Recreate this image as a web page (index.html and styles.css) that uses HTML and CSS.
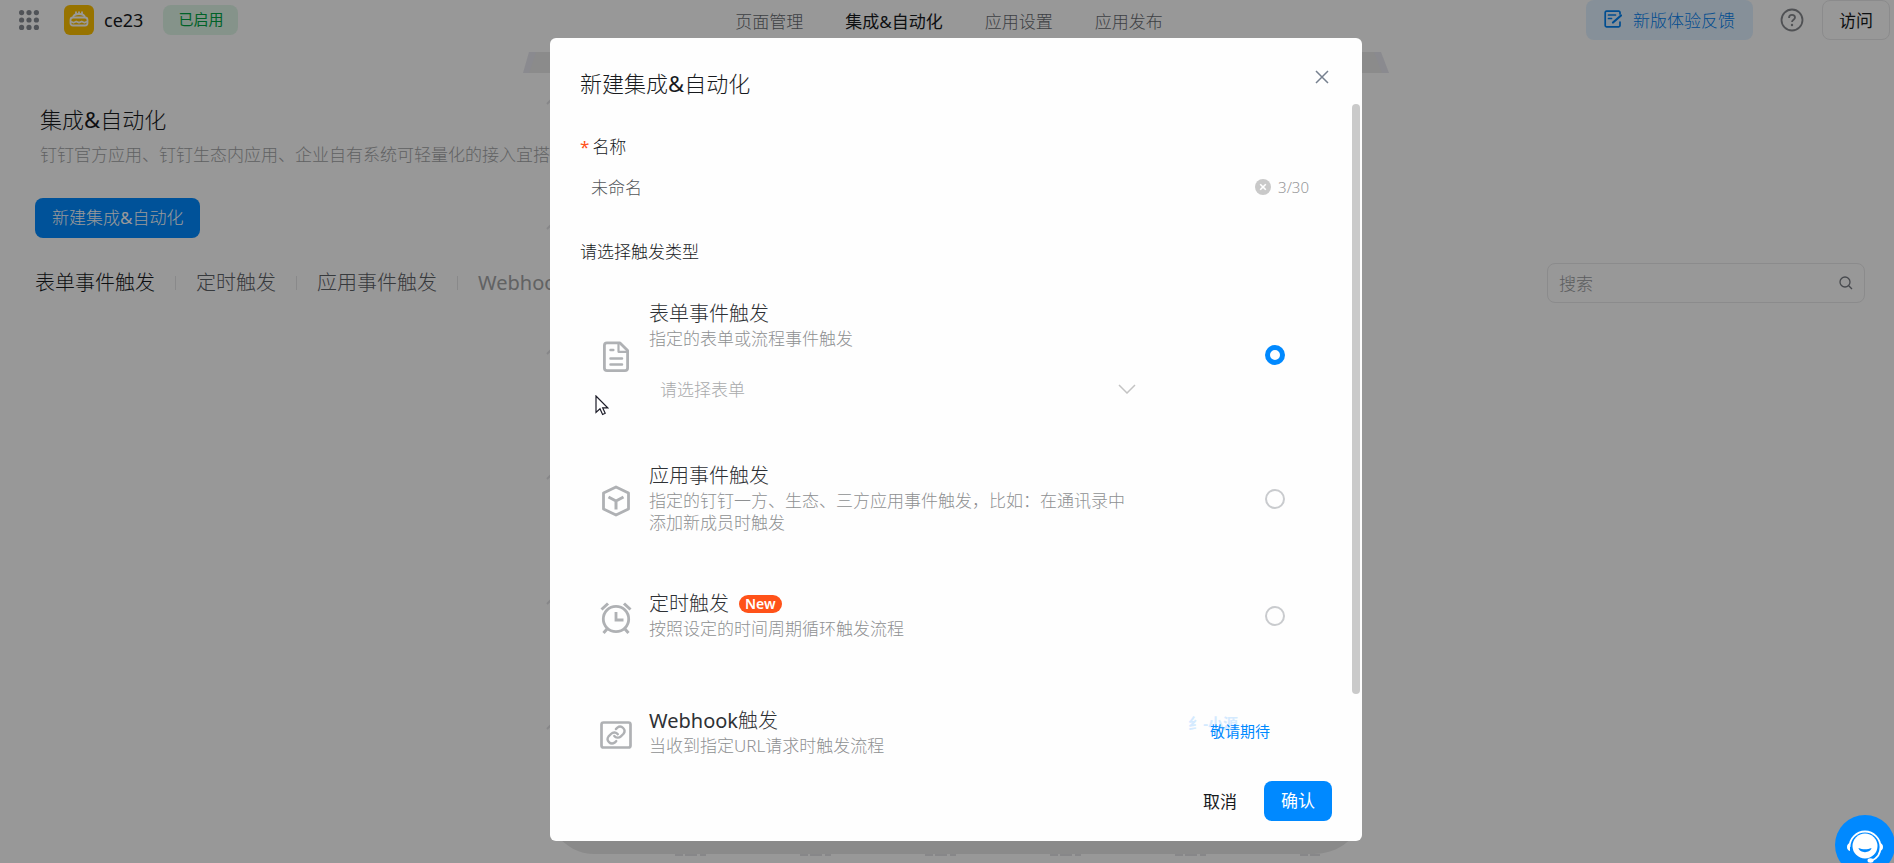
FILE: index.html
```html
<!DOCTYPE html>
<html lang="zh-CN">
<head>
<meta charset="utf-8">
<title>集成&amp;自动化</title>
<link rel="stylesheet" href="styles.css">
</head>
<body>
<div class="page">
  <header class="topbar">
    <div class="topbar-left">
      <button class="apps" type="button" aria-label="应用列表">
        <svg width="20" height="20" viewBox="0 0 20 20" fill="#868b93"><circle cx="2.6" cy="2.6" r="2.6"/><circle cx="10" cy="2.6" r="2.6"/><circle cx="17.4" cy="2.6" r="2.6"/><circle cx="2.6" cy="10" r="2.6"/><circle cx="10" cy="10" r="2.6"/><circle cx="17.4" cy="10" r="2.6"/><circle cx="2.6" cy="17.4" r="2.6"/><circle cx="10" cy="17.4" r="2.6"/><circle cx="17.4" cy="17.4" r="2.6"/></svg>
      </button>
      <svg class="logo" width="30" height="30" viewBox="0 0 30 30"><rect width="30" height="30" rx="6" fill="#fcc000"/><g fill="none" stroke="#fff" stroke-width="1.800" stroke-linejoin="round"><path d="M9 12.500c.3-2.500 2-3.500 6-3.500s5.700 1 6 3.500"/><rect x="6.500" y="12.500" width="17" height="8" rx="2.500"/><path d="M7 16.500l2.500 1.200 2.700-1.200 2.800 1.200 2.800-1.200 2.700 1.200 2.500-1.200"/><path d="M12 9V6.500M15 9V6.500M18 9V6.500"/></g></svg>
      <span class="app-name">ce23</span>
      <span class="status">已启用</span>
    </div>
    <nav class="nav">
      <a href="#">页面管理</a>
      <a href="#" class="active">集成&amp;自动化</a>
      <a href="#">应用设置</a>
      <a href="#">应用发布</a>
    </nav>
    <div class="topbar-right">
      <button class="feedback" type="button">
        <svg width="18" height="18" viewBox="0 0 18 18" fill="none" stroke="currentColor" stroke-width="1.700" stroke-linecap="round"><path d="M16 4V2.500C16 1.700 15.500 1.200 14.700 1.200H2.500C1.700 1.200 1.200 1.700 1.200 2.500v13c0 .8.500 1.300 1.300 1.300h12.200c.8 0 1.300-.5 1.300-1.300V12"/><path d="M4.500 5h7M4.500 8.500h3"/><path d="M9 12.500L17 5.500" stroke-width="2.200"/></svg>
        <span>新版体验反馈</span>
      </button>
      <button class="help" type="button" aria-label="帮助">
        <svg width="24" height="24" viewBox="0 0 24 24" fill="none" stroke="#85888d" stroke-width="1.800"><circle cx="12" cy="12" r="10.500"/><path d="M9 10c0-1.900 1.200-3.100 3-3.100s3 1.100 3 2.700c0 2.100-3 2.300-3 4.500"/><circle cx="12" cy="17" r="1.200" fill="#85888d" stroke="none"/></svg>
      </button>
      <button class="visit" type="button">访问</button>
    </div>
  </header>

  <svg class="backdrop" width="872" height="811" viewBox="0 0 872 811" aria-hidden="true">
    <path d="M9 0H861L869 21H3z" fill="#e6e6ee"/><path d="M16 0H854L862 21H9z" fill="#e8e8e8"/>
    <path d="M33 780H838C822 797 810 802 790 802H75C58 802 47 795 33 780z" fill="#e6e6e6"/>
    <g fill="none" stroke="#e2e2e5" stroke-width="2"><path d="M27 52l5-5M27 177l5-5M27 302l5-5M27 427l5-5M27 552l5-5M27 677l5-5"/><path stroke-dasharray="8 2 12 3 6 94" d="M155 803H800"/></g>
  </svg>

  <main class="main">
    <h1 class="page-title">集成<span class="latin">&amp;</span>自动化</h1>
    <p class="page-desc">钉钉官方应用、钉钉生态内应用、企业自有系统可轻量化的接入宜搭</p>
    <button class="create" type="button">新建集成<span class="latin">&amp;</span>自动化</button>
    <div class="toolbar">
      <div class="tabs">
        <button class="tab current" type="button">表单事件触发</button>
        <button class="tab" type="button">定时触发</button>
        <button class="tab" type="button">应用事件触发</button>
        <button class="tab muted" type="button"><span class="latin">Webhook</span>触发</button>
      </div>
      <label class="search">
        <input type="search" placeholder="搜索" aria-label="搜索">
        <svg width="14" height="14" viewBox="0 0 14 14" fill="none" stroke="#777b82" stroke-width="1.300"><circle cx="6" cy="6" r="5"/><path d="M9.700 9.700L13 13"/></svg>
      </label>
    </div>
  </main>
</div>

<div class="overlay">
  <section class="modal" role="dialog" aria-labelledby="dialog-title">
    <header class="modal-head">
      <h2 id="dialog-title">新建集成<span class="latin">&amp;</span>自动化</h2>
      <button class="close" type="button" aria-label="关闭"><svg width="14" height="14" viewBox="0 0 14 14" stroke="#76808f" stroke-width="1.500"><path d="M1 1l12 12M13 1L1 13"/></svg></button>
    </header>

    <div class="modal-body">
      <label class="field-label" for="name"><span class="required">*</span>名称</label>
      <div class="name-field">
        <input id="name" type="text" value="未命名" maxlength="30">
        <button class="clear" type="button" aria-label="清空"><svg width="16" height="16" viewBox="0 0 16 16"><circle cx="8" cy="8" r="8" fill="#c9c9c9"/><path d="M5.200 5.200l5.600 5.600M10.800 5.200l-5.600 5.600" stroke="#fff" stroke-width="1.600"/></svg></button>
        <span class="count">3/30</span>
      </div>

      <h3 class="group-label">请选择触发类型</h3>
      <div class="options">
        <div class="option expanded">
          <svg class="option-icon" width="32" height="32" viewBox="0 0 32 32" fill="none" stroke="#afb1b4" stroke-width="2.800" stroke-linejoin="round" stroke-linecap="round"><path d="M7 1.900H20L27.600 9.500V27c0 1.700-1 2.700-2.700 2.700H7.100c-1.700 0-2.700-1-2.700-2.700V4.600C4.400 2.900 5.400 1.900 7 1.900z"/><path d="M18.500 2.500v8.300h8.500" stroke-width="2.200"/><path d="M10.500 9h2.800M10.500 17.600h11.500M10.500 23.400h11.500" stroke-width="2.500"/></svg>
          <div class="option-main">
            <label class="option-title" for="t1">表单事件触发</label>
            <p class="option-desc">指定的表单或流程事件触发</p>
            <div class="form-select">
              <select aria-label="请选择表单"><option>请选择表单</option></select>
              <svg width="18" height="10" viewBox="0 0 18 10" fill="none" stroke="#c3c3c3" stroke-width="1.500"><path d="M1 1l8 8 8-8"/></svg>
            </div>
          </div>
          <input class="radio" type="radio" name="trigger" id="t1" checked>
        </div>

        <div class="option">
          <svg class="option-icon" width="32" height="32" viewBox="0 0 32 32" fill="none" stroke="#afb1b4" stroke-width="2.800" stroke-linejoin="round"><path d="M16 2l12.500 6v16L16 30 3.500 24V8z"/><path d="M8.500 12L16 16l7.500-4M16 16v8.500" stroke-width="3"/></svg>
          <div class="option-main">
            <label class="option-title" for="t2">应用事件触发</label>
            <p class="option-desc">指定的钉钉一方、生态、三方应用事件触发，比如：在通讯录中添加新成员时触发</p>
          </div>
          <input class="radio" type="radio" name="trigger" id="t2">
        </div>

        <div class="option">
          <svg class="option-icon" width="32" height="32" viewBox="0 0 32 32" fill="none" stroke="#afb1b4" stroke-width="2.800"><circle cx="16" cy="17" r="12.700"/><path d="M16 10v8h7.500"/><path d="M1.500 7.500l6.500-6M30.500 7.500L24 1.500" stroke-width="3"/><path d="M7.500 26.500L3.500 31M24.500 26.500l4 4.500" stroke-width="3"/></svg>
          <div class="option-main">
            <div class="title-line"><label class="option-title" for="t3">定时触发</label><span class="new">New</span></div>
            <p class="option-desc">按照设定的时间周期循环触发流程</p>
          </div>
          <input class="radio" type="radio" name="trigger" id="t3">
        </div>

        <div class="option">
          <svg class="option-icon" width="32" height="32" viewBox="0 0 32 32" fill="none" stroke="#afb1b4" stroke-width="2.700" stroke-linecap="round" stroke-linejoin="round"><rect x="1.500" y="3.500" width="29" height="25" rx="2"/><g transform="translate(5.500 5.500) scale(.88)"><path d="M10 13a5 5 0 0 0 7.500.5l3-3a5 5 0 0 0-7-7l-1.700 1.700"/><path d="M14 11a5 5 0 0 0-7.500-.5l-3 3a5 5 0 0 0 7 7l1.700-1.700"/></g></svg>
          <div class="option-main">
            <span class="option-title"><span class="latin">Webhook</span>触发</span>
            <p class="option-desc">当收到指定URL请求时触发流程</p>
          </div>
          <span class="soon"><span class="ghost" aria-hidden="true">纟-小源</span>敬请期待</span>
        </div>
      </div>
    </div>

    <footer class="modal-foot">
      <button class="cancel" type="button">取消</button>
      <button class="confirm" type="button">确认</button>
    </footer>
    <div class="scroll-thumb"></div>
  </section>
</div>

<button class="support" type="button" aria-label="客服">
  <svg width="60" height="60" viewBox="0 0 60 60"><circle cx="30" cy="30" r="30" fill="#0089ff"/><circle cx="30" cy="31" r="12.500" fill="#fff"/><path d="M14.500 32a15.500 15.500 0 0 1 31 0c0 7-3 11-8.500 13.500" fill="none" stroke="#fff" stroke-width="1.800"/><path d="M15 28v8c-2-.5-3-2-3-4s1-3.500 3-4zM45 28v8c2-.5 3-2 3-4s-1-3.500-3-4z" fill="#fff"/><ellipse cx="35.500" cy="45.500" rx="3" ry="2.200" fill="#fff"/><path d="M23.500 33c4 1.800 9 1.800 13 0-1 5.500-12 5.500-13 0z" fill="#0089ff"/></svg>
</button>
<svg class="cursor" width="14" height="21" viewBox="0 0 14 21" aria-hidden="true"><path d="M1 1v16.500l4-3.700 2.600 5.700 2.600-1.200-2.500-5.400h5z" fill="#fff" stroke="#1c1c28" stroke-width="1.200"/></svg>
</body>
</html>
```
FILE: styles.css
```css
* { box-sizing: border-box; }
body {
  margin: 0;
  height: 100vh;
  overflow: hidden;
  position: relative;
  background: #fdfdfd;
  color: #171a1d;
  font-family: "Noto Sans", "Noto Sans CJK SC", sans-serif;
  font-size: 17px;
  font-weight: 300;
}
h1, h2, h3, p { margin: 0; font-weight: 300; }
button, input, select { font: inherit; color: inherit; margin: 0; }
button { border: 0; background: none; padding: 0; white-space: nowrap; }
svg { display: block; flex: none; }
a { color: inherit; text-decoration: none; }
.latin { font-weight: 400; }

.topbar {
  display: grid;
  grid-template-columns: 1fr auto 1fr;
  grid-template-rows: 40px;
  padding: 0 4px 0 8px;
}
.topbar-left { display: flex; align-items: center; padding-left: 11px; }
.apps { margin-right: 25px; }
.app-name { margin: 0 20px 0 10px; font-size: 18px; font-weight: 400; }
.status {
  height: 30px;
  padding: 0 15px;
  border-radius: 8px;
  background: #def5e6;
  color: #00a344;
  font-size: 15px;
  font-weight: 400;
  line-height: 28px;
}
.nav { display: flex; gap: 42px; line-height: 44px; color: #666a70; }
.nav .active { color: #171a1d; font-weight: 400; }
.topbar-right { display: flex; align-items: center; justify-content: flex-end; }
.feedback {
  display: flex;
  align-items: center;
  gap: 11px;
  height: 40px;
  padding: 0 18px 2px;
  border-radius: 8px;
  background: #e0f0ff;
  color: #0080f0;
}
.help { margin: 0 18px 0 27px; }
.visit {
  height: 40px;
  padding: 0 16px 2px;
  border: 1px solid #e8e8ea;
  border-radius: 8px;
  font-weight: 400;
}

.backdrop { position: absolute; top: 52px; left: calc(50% - 427px); }

.main { padding: 61px 29px 0 35px; }
.page-title { padding-left: 5px; font-size: 22px; line-height: 36px; }
.page-desc { padding: 5px 0 0 5px; line-height: 26px; color: #a2a3a5; }
.create {
  display: block;
  height: 40px;
  margin-top: 30px;
  padding: 0 17px 3px;
  border-radius: 8px;
  background: #0089ff;
  color: #fff;
}
.toolbar { display: flex; justify-content: space-between; margin-top: 25px; }
.tabs { display: flex; align-items: center; font-size: 20px; color: #5d6167; }
.tab { line-height: 40px; }
.tab + .tab::before {
  content: "";
  display: inline-block;
  width: 1px;
  height: 14px;
  margin: 0 20px;
  background: #e4e4e6;
}
.tab.current { color: #171a1d; }
.tab.muted { color: #a2a3a5; }
.search {
  display: flex;
  align-items: center;
  width: 318px;
  height: 40px;
  padding: 0 11px;
  border: 1px solid #e8e8ea;
  border-radius: 8px;
}
.search input { flex: 1; min-width: 0; border: 0; padding: 0; background: none; outline: 0; }
.search input::placeholder { color: #9a9c9f; }

.overlay {
  position: absolute;
  inset: 0;
  padding: 38px 0 22px 18px;
  background: rgba(0, 0, 0, .4);
}
.modal {
  position: relative;
  display: flex;
  flex-direction: column;
  max-width: 812px;
  height: 100%;
  margin: 0 auto;
  border-radius: 6px;
  background: #fefefe;
}
.modal-head {
  display: flex;
  justify-content: space-between;
  align-items: flex-start;
  padding: 27px 33px 0 30px;
}
.modal-head h2 { font-size: 22px; line-height: 36px; }
.close { padding: 5px 0; }
.modal-body { flex: 1; min-height: 0; overflow: hidden; padding: 31px 30px 0; }
.field-label { display: block; line-height: 30px; }
.required { margin-right: 3px; color: #ff5219; font-weight: 400; }
.name-field {
  display: flex;
  align-items: center;
  height: 50px;
  padding: 0 23px 1px 11px;
}
.name-field input { flex: 1; min-width: 0; border: 0; padding: 0; background: none; outline: 0; color: #54575b; }
.count { margin-left: 7px; font-size: 15px; color: #969799; }
.group-label { margin-top: 28px; font-size: 17px; line-height: 24px; }
.options { display: flex; flex-direction: column; gap: 20px; margin-top: 16px; }
.option {
  display: flex;
  align-items: center;
  min-height: 97px;
  padding: 12px 47px 10px 20px;
}
.option.expanded { padding-top: 20px; padding-bottom: 19px; }
.option-icon { margin: 4px 17px 0 0; }
.option-main { flex: 0 1 490px; margin-right: auto; padding-bottom: 2px; }
.option-title { display: block; font-size: 20px; line-height: 28px; color: #2e3135; }
.option-desc { line-height: 22px; color: #8e9092; }
.title-line { display: flex; align-items: center; gap: 10px; }
.new {
  padding: 0 6px;
  border-radius: 9px;
  background: #ff5219;
  color: #fff;
  font-size: 14px;
  font-weight: 600;
  line-height: 18px;
}
.form-select { display: flex; align-items: center; height: 38px; margin-top: 20px; padding: 0 3px 0 11px; color: #a9aaac; }
.form-select select { flex: 1; appearance: none; border: 0; padding: 0; background: none; outline: 0; }
.radio {
  appearance: none;
  width: 20px;
  height: 20px;
  border: 2px solid #c9cbce;
  border-radius: 50%;
}
.radio:checked { border: 5px solid #0089ff; }
.soon {
  position: relative;
  isolation: isolate;
  margin: 0 15px 4px 0;
  font-size: 15px;
  font-weight: 400;
  color: #0089ff;
}
.ghost {
  position: absolute;
  z-index: -1;
  right: 32px;
  bottom: 8px;
  color: #d4eaff;
  font-weight: 700;
  white-space: nowrap;
}
.modal-foot {
  display: flex;
  justify-content: flex-end;
  align-items: center;
  gap: 27px;
  padding: 15px 30px 20px;
}
.cancel { padding-bottom: 2px; font-weight: 400; }
.confirm { height: 40px; padding: 0 17px 3px; border-radius: 8px; background: #0089ff; color: #fff; font-weight: 400; }
.scroll-thumb {
  position: absolute;
  top: 66px;
  right: 2px;
  bottom: 147px;
  width: 8px;
  border-radius: 4px;
  background: #cacaca;
}
.support { position: absolute; right: -1px; bottom: -12px; }
.cursor { position: absolute; left: 595px; top: 395px; }
```
